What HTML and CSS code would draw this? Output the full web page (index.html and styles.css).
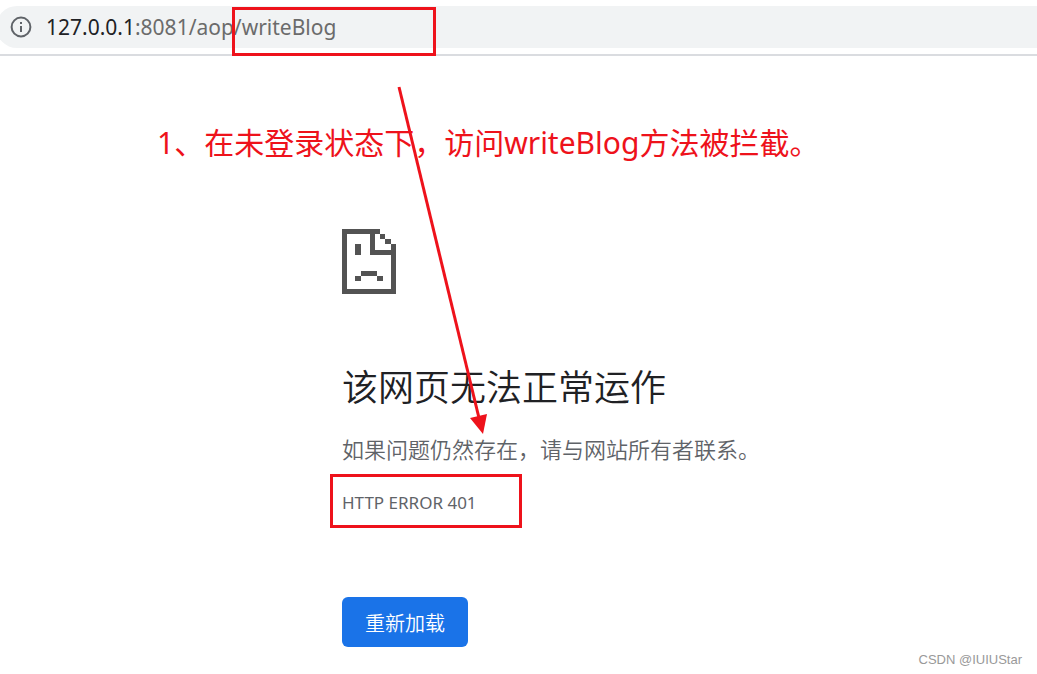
FILE: index.html
```html
<!DOCTYPE html>
<html lang="zh-CN">
<head>
  <meta charset="UTF-8" />
  <meta name="viewport" content="width=device-width, initial-scale=1.0"/>
  <title>127.0.0.1</title>
  <link rel="stylesheet" href="styles.css">
</head>
<body>

  <header class="toolbar">
    <div class="address-bar">
      <svg class="info-icon" viewBox="0 0 22 22" aria-hidden="true">
        <circle cx="11" cy="11" r="9.4" fill="none" stroke="currentColor" stroke-width="2"/>
        <path d="M10 6h2v2h-2zM10 10h2v6h-2z" fill="currentColor"/>
      </svg>
      <div class="url"><span class="host">127.0.0.1</span>:8081/aop/writeBlog</div>
      <span class="mark mark-url"></span>
    </div>
  </header>

  <p class="note">1、在未登录状态下，访问writeBlog方法被拦截。</p>

  <main class="error-page">
    <svg class="sad-icon" viewBox="0 0 54 65" shape-rendering="crispEdges" aria-hidden="true">
      <path d="M0 0H38V5H33V21H49V15H54V65H0ZM5 5V60H49V26H28V5Z" fill-rule="evenodd"/>
      <path d="M38 5h5v5h-5zM43 10h6v5h-6zM13 15h6v11h-6zM19 42h16v5h-16zM13 47h6v5h-6zM35 47h6v5h-6z"/>
    </svg>
    <h1>该网页无法正常运作</h1>
    <p class="message">如果问题仍然存在，请与网站所有者联系。</p>
    <div class="error-code">HTTP ERROR 401<span class="mark mark-code"></span></div>
    <button class="reload-btn" type="button">重新加载</button>
  </main>

  <svg class="arrow" viewBox="0 0 100 350" aria-hidden="true">
    <path d="M9 1L89 332" stroke="currentColor" stroke-width="3"/>
    <path d="M80 332L97 328L93 348Z" fill="currentColor"/>
  </svg>

  <footer class="watermark">CSDN @IUIUStar</footer>

</body>
</html>
```

FILE: styles.css
```css
* {
  box-sizing: border-box;
}

body {
  position: relative;
  margin: 0;
  min-height: 100vh;
  background: #fff;
  color: #5f6368;
  font-family: "Noto Sans", "Noto Sans CJK SC", sans-serif;
}

.toolbar {
  padding: 6px 0;
  border-bottom: 2px solid #dadce0;
}

.address-bar {
  position: relative;
  display: flex;
  align-items: center;
  gap: 14px;
  height: 42px;
  margin-left: -4px;
  padding-left: 14px;
  background: #f1f3f4;
  border-radius: 21px 0 0 21px;
}

.info-icon {
  width: 22px;
  height: 22px;
}

.url {
  font-size: 21px;
  line-height: 42px;
  color: #6b6b6b;
}

.host {
  color: #202124;
}

/* red annotations */
.mark {
  position: absolute;
  border: 3px solid #ee121b;
}

.mark-url {
  top: 1px;
  left: 236px;
  width: 204px;
  height: 49px;
}

.mark-code {
  top: -14px;
  left: -12px;
  width: 192px;
  height: 54px;
}

.arrow {
  position: absolute;
  top: 86px;
  left: 390px;
  width: 100px;
  height: 350px;
  color: #ee121b;
}

.note {
  margin: 0;
  padding: 65px 0 0 157px;
  font-size: 30px;
  line-height: 44px;
  color: #ee121b;
}

.error-page {
  padding: 64px 0 0 342px;
}

.sad-icon {
  display: block;
  width: 54px;
  height: 65px;
  fill: #535353;
}

h1 {
  margin: 68px 0 0;
  font-size: 36px;
  font-weight: 350;
  line-height: 52px;
  color: #202124;
}

.message {
  margin: 18px 0 0;
  font-size: 22px;
  font-weight: 350;
  line-height: 34px;
}

.error-code {
  position: relative;
  margin-top: 22px;
  font-size: 17px;
  line-height: 30px;
}

.reload-btn {
  margin-top: 79px;
  padding: 0 23px;
  height: 50px;
  border: none;
  border-radius: 6px;
  background: #1a73e8;
  color: #fff;
  font-family: inherit;
  font-size: 20px;
  font-weight: 350;
  cursor: pointer;
}

.watermark {
  position: absolute;
  right: 15px;
  bottom: 4px;
  font-family: "Liberation Sans", sans-serif;
  font-size: 13px;
  line-height: 20px;
  color: #999;
}
```
